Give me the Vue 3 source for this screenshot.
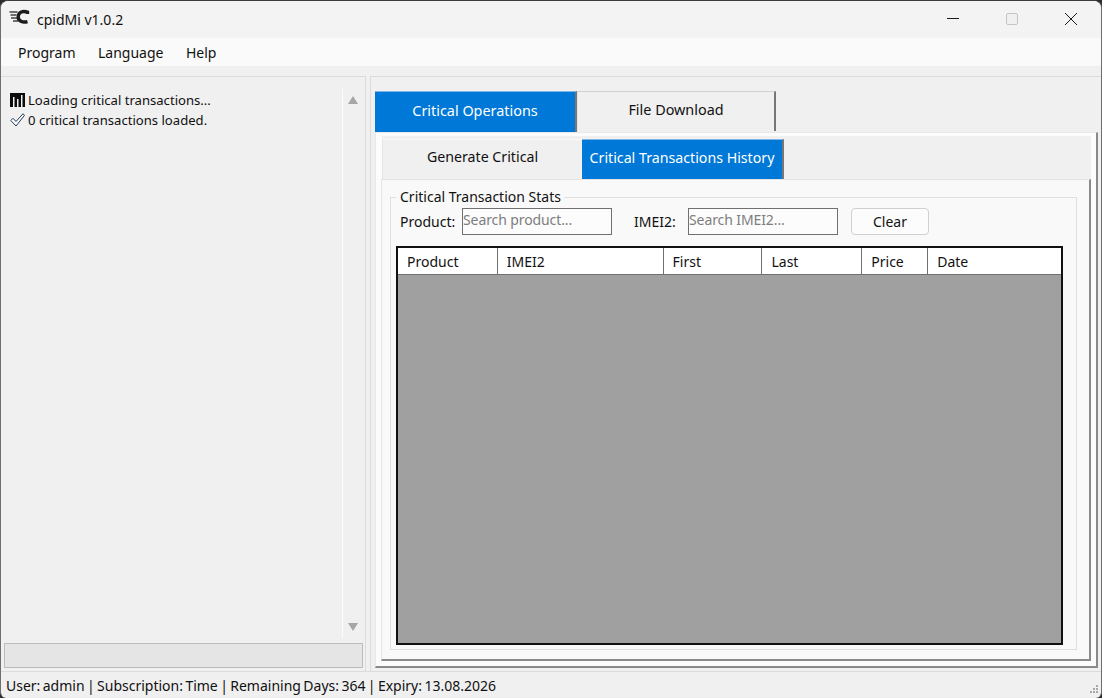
<template>
  <div class="window">
    <div class="titlebar">
      <svg class="logo" width="22" height="16" viewBox="0 0 22 16">
        <path d="M0.500 3h8M1.500 6h6M2 9h6M4 12h5" stroke="#444" stroke-width="1.500" fill="none" />
        <path d="M18.500 5V3.200C14 1.500 9.500 3 9.200 7.500 9 12 13.500 14 18.500 12.600" stroke="#1c1c1c" stroke-width="3.400" fill="none" />
      </svg>
      <span class="title">cpidMi v1.0.2</span>
      <div class="win-controls">
        <svg width="14" height="14" viewBox="0 0 14 14"><path d="M1 6.500h12" stroke="#1a1a1a" stroke-width="1" /></svg>
        <svg width="14" height="14" viewBox="0 0 14 14"><rect x="1.500" y="1.500" width="11" height="11" rx="1.500" fill="#f0f0f0" stroke="#c4c4c4" /></svg>
        <svg width="14" height="14" viewBox="0 0 14 14"><path d="M1 1l12 12M13 1L1 13" stroke="#1a1a1a" stroke-width="1" /></svg>
      </div>
    </div>

    <div class="menubar">
      <span v-for="item in menu" :key="item" class="menu-item">{{ item }}</span>
    </div>

    <div class="main">
      <div class="left-col">
        <div class="log-panel">
          <div class="log-lines">
            <div class="log-line">
              <svg width="15" height="14" viewBox="0 0 15 14">
                <path d="M0 0h15v14H0z" fill="#0c0c0c" />
                <path d="M3 14V4h1.500v10zM7 14V6h1.500v8zM11 14V2h1.500v12z" fill="#f0f0f0" />
              </svg>
              <span>Loading critical transactions...</span>
            </div>
            <div class="log-line">
              <svg width="15" height="14" viewBox="0 0 15 14">
                <path d="M0.800 7.500L3 5.300l3 3.200L13 0.800l1.500 1.500L6 13z" fill="#fff" stroke="#1e3a56" stroke-width="1" stroke-linejoin="round" />
              </svg>
              <span>0 critical transactions loaded.</span>
            </div>
          </div>
          <div class="log-scroll">
            <span class="arrow-up"></span>
            <span class="arrow-down"></span>
          </div>
        </div>
        <div class="progress"></div>
      </div>

      <div class="right-col">
        <div class="outer-tabs">
          <div class="outer-tab active">Critical Operations</div>
          <div class="outer-tab">File Download</div>
        </div>
        <div class="outer-pane">
          <div class="inner-tabs">
            <div class="inner-tab">Generate Critical</div>
            <div class="inner-tab active">Critical Transactions History</div>
          </div>
          <div class="inner-pane">
            <fieldset class="group">
              <legend>Critical Transaction Stats</legend>
              <div class="filters">
                <label class="lbl-product">Product:</label>
                <input class="search search-product" placeholder="Search product..." />
                <label class="lbl-imei">IMEI2:</label>
                <input class="search search-imei" placeholder="Search IMEI2..." />
                <button class="clear">Clear</button>
              </div>
              <div class="table">
                <div class="thead">
                  <div
                    v-for="col in columns"
                    :key="col.name"
                    class="th"
                    :style="{ width: col.width + 'px' }"
                  >{{ col.name }}</div>
                </div>
                <div class="tbody"></div>
              </div>
            </fieldset>
          </div>
        </div>
      </div>
    </div>

    <div class="statusbar">
      <span>User: admin | Subscription: Time | Remaining Days: 364 | Expiry: 13.08.2026</span>
      <svg class="grip" width="12" height="12" viewBox="0 0 12 12">
        <path d="M9 1h2v2H9zM6 4h2v2H6zM9 4h2v2H9zM3 7h2v2H3zM6 7h2v2H6zM9 7h2v2H9z" fill="#a8a8a8" />
      </svg>
    </div>
  </div>
</template>

<script setup>
const menu = ['Program', 'Language', 'Help']

const columns = [
  { name: 'Product', width: 100 },
  { name: 'IMEI2', width: 166 },
  { name: 'First', width: 99 },
  { name: 'Last', width: 100 },
  { name: 'Price', width: 66 },
  { name: 'Date', width: 133 }
]
</script>

<style>
html, body {
  margin: 0;
  background: #2b2b2b;
  overflow: hidden;
}
</style>

<style scoped>
.window {
  width: 1102px;
  height: 698px;
  box-sizing: border-box;
  display: flex;
  flex-direction: column;
  position: relative;
  background: #f0f0f0;
  border-top: 1px solid #3a3a3a;
  border-left: 1px solid #6e6e6e;
  border-right: 1px solid #6e6e6e;
  border-radius: 8px 8px 6px 6px;
  overflow: hidden;
  font-family: "Noto Sans", "Open Sans", sans-serif;
  font-size: 14px;
  color: #111;
}

.titlebar {
  height: 37px;
  flex: none;
  display: flex;
  align-items: center;
  background: #f3f3f3;
  padding-left: 8px;
}

.logo {
  margin-top: -6px;
}

.title {
  margin-left: 6px;
}

.win-controls {
  margin-left: auto;
  display: flex;
  gap: 45px;
  padding-right: 23px;
  margin-top: -1px;
}

.menubar {
  height: 28px;
  flex: none;
  display: flex;
  align-items: center;
  background: #fafafa;
  padding-left: 17px;
  gap: 22.500px;
}

.main {
  flex: 1;
  display: flex;
  padding-top: 10px;
  min-height: 0;
  gap: 4px;
}

.left-col {
  width: 365px;
  flex: none;
  display: flex;
  flex-direction: column;
  border-top: 1px solid #dcdcdc;
  border-right: 1px solid #dcdcdc;
  box-sizing: border-box;
  padding-bottom: 3px;
}

.log-panel {
  flex: 1;
  display: flex;
  min-height: 0;
}

.log-lines {
  flex: 1;
  padding: 13px 0 0 9px;
  font-size: 13.100px;
}

.log-line {
  display: flex;
  align-items: center;
  height: 20px;
  gap: 3px;
}

.log-scroll {
  width: 23px;
  flex: none;
  box-sizing: border-box;
  border-left: 1px solid #fbfbfb;
  margin: 12px 0 5px;
  display: flex;
  flex-direction: column;
  justify-content: space-between;
  align-items: center;
  padding: 7px 2px 7px 0;
}

.arrow-up,
.arrow-down {
  width: 0;
  height: 0;
  border-left: 5.500px solid transparent;
  border-right: 5.500px solid transparent;
}

.arrow-up {
  border-bottom: 8px solid #a6a6a6;
}

.arrow-down {
  border-top: 8px solid #a6a6a6;
}

.progress {
  height: 25px;
  flex: none;
  margin: 0 2px 0 3px;
  background: #e5e5e5;
  border: 1px solid #bcbcbc;
  box-sizing: border-box;
}

.right-col {
  flex: 1;
  display: flex;
  flex-direction: column;
  border-top: 1px solid #dcdcdc;
  border-left: 1px solid #dcdcdc;
  padding: 14px 3px 3px 4px;
  box-sizing: border-box;
  min-width: 0;
}

.outer-tabs {
  display: flex;
  height: 41px;
  flex: none;
  align-items: flex-end;
}

.outer-tab {
  height: 40px;
  box-sizing: border-box;
  display: flex;
  align-items: center;
  justify-content: center;
  width: 199px;
  background: #f0f0f0;
  border-top: 1px solid #d0d0d0;
  border-right: 2px solid #777;
  border-left: 1px solid #e4e4e4;
  margin-bottom: 1px;
  padding-bottom: 4px;
  font-size: 14.400px;
}

.outer-tab.active {
  width: 202px;
  height: 41px;
  margin-bottom: 0;
  background: #0078d7;
  color: #fff;
  border: 0;
  border-right: 2px solid #777;
  border-top: 1px solid #7fb6e6;
  padding-bottom: 4px;
}

.outer-pane {
  flex: 1;
  min-height: 0;
  display: flex;
  flex-direction: column;
  background: #fcfcfc;
  border-top: 1px solid #e8e8e8;
  border-left: 1px solid #e8e8e8;
  border-right: 2px solid #8a8a8a;
  border-bottom: 2px solid #8a8a8a;
  box-sizing: border-box;
  padding: 3px 5px 5px 5px;
}

.inner-tabs {
  display: flex;
  height: 43px;
  flex: none;
  margin-left: 1px;
  background: #f0f0f0;
  align-items: flex-end;
}

.inner-tab {
  height: 40px;
  box-sizing: border-box;
  display: flex;
  align-items: center;
  justify-content: center;
  width: 200px;
  background: #f0f0f0;
  border-top: 1px solid #fafafa;
  border-left: 1px solid #e4e4e4;
  padding-bottom: 6px;
  font-size: 14.200px;
}

.inner-tab.active {
  width: 202px;
  background: #0078d7;
  color: #fff;
  border: 0;
  border-right: 2px solid #777;
  border-top: 1px solid #7fb6e6;
  padding-bottom: 4px;
  white-space: nowrap;
}

.inner-pane {
  flex: 1;
  min-height: 0;
  display: flex;
  background: #f9f9f9;
  border-top: 1px solid #e4e4e4;
  border-left: 1px solid #e4e4e4;
  border-right: 2px solid #8a8a8a;
  border-bottom: 2px solid #8a8a8a;
  box-sizing: border-box;
  padding: 8px 12px 9px 8px;
}

.group {
  flex: 1;
  min-width: 0;
  margin: 0;
  border: 1px solid #dfdfdf;
  padding: 0 13px 4px 5px;
  display: flex;
  flex-direction: column;
  box-sizing: border-box;
}

.group legend {
  padding: 0 3px 0 4px;
  line-height: 18px;
}

.filters {
  display: flex;
  align-items: center;
  height: 27px;
  margin-bottom: 11px;
  margin-top: 2px;
}

.lbl-product {
  margin-left: 4px;
  width: 62px;
}

.lbl-imei {
  margin-left: 22px;
  width: 54px;
}

.search {
  width: 150px;
  height: 27px;
  box-sizing: border-box;
  border: 1px solid #707070;
  background: #fcfcfc;
  padding: 0 0 5px 0;
  font: inherit;
  letter-spacing: -0.1px;
  outline: none;
}

.search::placeholder {
  color: #7e7e7e;
  opacity: 1;
}

.clear {
  width: 78px;
  height: 27px;
  margin-left: 13px;
  box-sizing: border-box;
  border: 1px solid #d0d0d0;
  border-radius: 4px;
  background: #fcfcfc;
  font: inherit;
  color: #111;
  padding: 0;
}

.table {
  flex: 1;
  min-height: 0;
  display: flex;
  flex-direction: column;
  border: 2px solid #111;
  box-sizing: border-box;
}

.thead {
  display: flex;
  height: 27px;
  flex: none;
  background: #fff;
  border-bottom: 1px solid #707070;
  box-sizing: border-box;
}

.th {
  box-sizing: border-box;
  border-right: 1px solid #707070;
  padding-left: 9px;
  display: flex;
  align-items: center;
}

.th:last-child {
  border-right: 0;
}

.tbody {
  flex: 1;
  background: #a0a0a0;
}

.statusbar {
  height: 27px;
  flex: none;
  display: flex;
  align-items: center;
  padding-left: 5px;
  border-top: 1px solid #dcdcdc;
  box-sizing: border-box;
  word-spacing: -1.250px;
}

.grip {
  position: absolute;
  right: 2px;
  bottom: 2px;
}
</style>
